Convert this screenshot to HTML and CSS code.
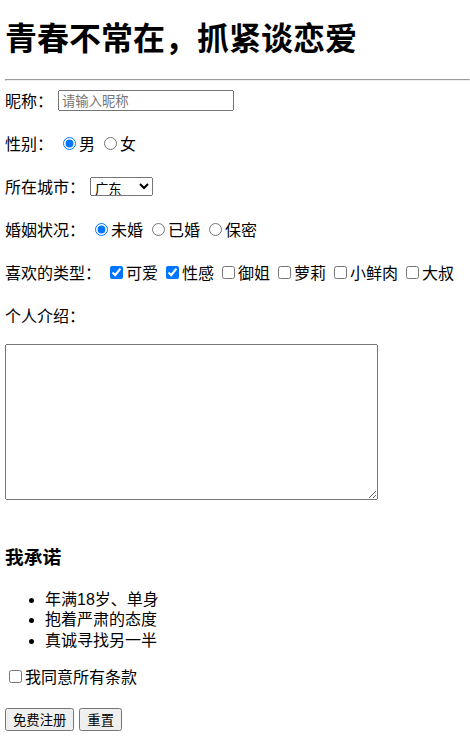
FILE: index.html
```html
<!DOCTYPE html>
<html lang="zh-CN">
<head>
<meta charset="utf-8">
<title>青春不常在，抓紧谈恋爱</title>
<link rel="stylesheet" href="styles.css">
</head>
<body>
<div class="page">
  <h1 class="title">青春不常在，抓紧谈恋爱</h1>
  <hr class="rule">
  <form class="form">
    <div class="rows">
      <div class="row">
        <span class="lbl">昵称：</span>
        <input class="text-input" type="text" placeholder="请输入昵称">
      </div>
      <div class="row">
        <span class="lbl">性别：</span>
        <label class="opt"><input class="radio" type="radio" name="sex" checked>男</label>
        <label class="opt"><input class="radio" type="radio" name="sex">女</label>
      </div>
      <div class="row">
        <span class="lbl">所在城市：</span>
        <select class="city">
          <option>广东</option>
          <option>北京</option>
          <option>上海</option>
        </select>
      </div>
      <div class="row">
        <span class="lbl">婚姻状况：</span>
        <label class="opt"><input class="radio" type="radio" name="marry" checked>未婚</label>
        <label class="opt"><input class="radio" type="radio" name="marry">已婚</label>
        <label class="opt"><input class="radio" type="radio" name="marry">保密</label>
      </div>
      <div class="row">
        <span class="lbl">喜欢的类型：</span>
        <label class="opt"><input class="check" type="checkbox" checked>可爱</label>
        <label class="opt"><input class="check" type="checkbox" checked>性感</label>
        <label class="opt"><input class="check" type="checkbox">御姐</label>
        <label class="opt"><input class="check" type="checkbox">萝莉</label>
        <label class="opt"><input class="check" type="checkbox">小鲜肉</label>
        <label class="opt"><input class="check" type="checkbox">大叔</label>
      </div>
      <div class="row">
        <span class="lbl">个人介绍：</span>
      </div>
    </div>
    <textarea class="intro"></textarea>
    <h3 class="promise">我承诺</h3>
    <ul class="list">
      <li>年满18岁、单身</li>
      <li>抱着严肃的态度</li>
      <li>真诚寻找另一半</li>
    </ul>
    <div class="row agree-row">
      <label class="opt"><input class="check" type="checkbox">我同意所有条款</label>
    </div>
    <div class="buttons">
      <button class="btn" type="button">免费注册</button>
      <button class="btn" type="reset">重置</button>
    </div>
  </form>
</div>
</body>
</html>
```

FILE: styles.css
```css
html, body {
  margin: 0;
  padding: 0;
  background: #ffffff;
}

body {
  font-family: "Noto Sans CJK SC", "Noto Sans", sans-serif;
  font-size: 16px;
  color: #000000;
}

.page {
  padding: 15px 0 0 5px;
}

.title {
  margin: 0;
  font-size: 32px;
  font-weight: bold;
  line-height: 42px;
  height: 42px;
}

.rule {
  margin: 22px 0 8px 0;
}

.form {
  margin: 0;
}

.rows {
  display: flex;
  flex-direction: column;
  gap: 21px;
}

.row {
  display: flex;
  align-items: center;
  height: 22px;
  line-height: 21px;
  white-space: nowrap;
}

.lbl {
  margin-right: 5px;
}

.opt {
  display: flex;
  align-items: center;
  margin-right: 4px;
}

.radio {
  width: 13px;
  height: 13px;
  margin: 0 3px 0 5px;
}

.check {
  width: 13px;
  height: 13px;
  margin: 0 3px 0 4px;
}

.text-input {
  box-sizing: border-box;
  width: 176px;
  height: 21px;
  margin: 0;
  font-family: "Noto Sans CJK SC", sans-serif;
  font-size: 13.33px;
  padding: 1px 2px;
}

.text-input::placeholder {
  color: #757575;
}

.city {
  box-sizing: border-box;
  width: 63px;
  height: 19px;
  margin: 0;
  font-family: "Noto Sans CJK SC", sans-serif;
  font-size: 13.33px;
}

.intro {
  display: block;
  box-sizing: border-box;
  width: 373px;
  height: 156px;
  margin: 18px 0 0 0;
}

.promise {
  margin: 44px 0 0 0;
  font-size: 18.72px;
  font-weight: bold;
  line-height: 24px;
}

.list {
  margin: 21.5px 0 0 0;
  padding-left: 40px;
  font-family: "Liberation Sans", "Noto Sans CJK SC", sans-serif;
  line-height: 20.5px;
}

.agree-row {
  margin-top: 14px;
}

.buttons {
  display: flex;
  gap: 5px;
  margin-top: 21px;
}

.btn {
  box-sizing: border-box;
  height: 23px;
  margin: 0;
  padding: 0 6px;
  font-family: "Noto Sans CJK SC", sans-serif;
  font-size: 13.33px;
  line-height: 19px;
}
```
